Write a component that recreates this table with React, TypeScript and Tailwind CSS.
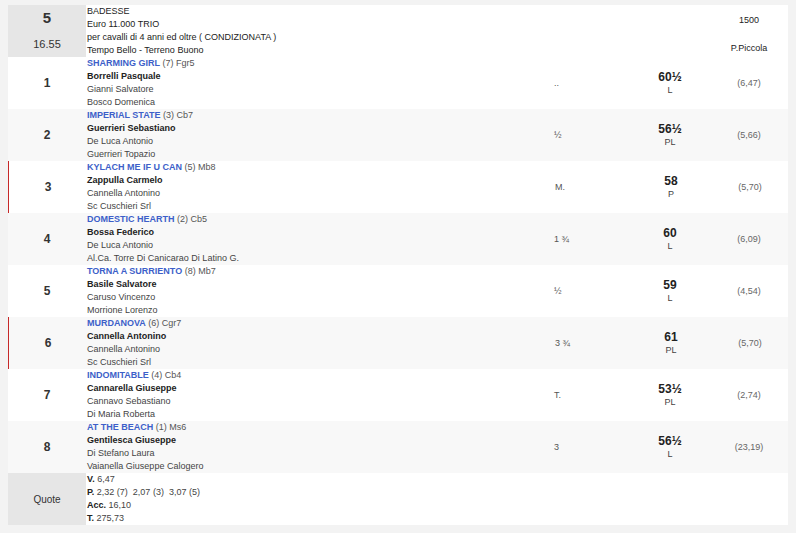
import React from 'react';

type Runner = {
  num: number;
  horse: string;
  extra: string;
  jockey: string;
  trainer: string;
  owner: string;
  dist: string;
  weight: string;
  flag: string;
  odds: string;
  mark?: boolean;
};

const RUNNERS: Runner[] = [
  { num: 1, horse: 'SHARMING GIRL', extra: '(7) Fgr5', jockey: 'Borrelli Pasquale', trainer: 'Gianni Salvatore', owner: 'Bosco Domenica', dist: '..', weight: '60½', flag: 'L', odds: '(6,47)' },
  { num: 2, horse: 'IMPERIAL STATE', extra: '(3) Cb7', jockey: 'Guerrieri Sebastiano', trainer: 'De Luca Antonio', owner: 'Guerrieri Topazio', dist: '½', weight: '56½', flag: 'PL', odds: '(5,66)' },
  { num: 3, horse: 'KYLACH ME IF U CAN', extra: '(5) Mb8', jockey: 'Zappulla Carmelo', trainer: 'Cannella Antonino', owner: 'Sc Cuschieri Srl', dist: 'M.', weight: '58', flag: 'P', odds: '(5,70)', mark: true },
  { num: 4, horse: 'DOMESTIC HEARTH', extra: '(2) Cb5', jockey: 'Bossa Federico', trainer: 'De Luca Antonio', owner: 'Al.Ca. Torre Di Canicarao Di Latino G.', dist: '1 ¾', weight: '60', flag: 'L', odds: '(6,09)' },
  { num: 5, horse: 'TORNA A SURRIENTO', extra: '(8) Mb7', jockey: 'Basile Salvatore', trainer: 'Caruso Vincenzo', owner: 'Morrione Lorenzo', dist: '½', weight: '59', flag: 'L', odds: '(4,54)' },
  { num: 6, horse: 'MURDANOVA', extra: '(6) Cgr7', jockey: 'Cannella Antonino', trainer: 'Cannella Antonino', owner: 'Sc Cuschieri Srl', dist: '3 ¾', weight: '61', flag: 'PL', odds: '(5,70)', mark: true },
  { num: 7, horse: 'INDOMITABLE', extra: '(4) Cb4', jockey: 'Cannarella Giuseppe', trainer: 'Cannavo Sebastiano', owner: 'Di Maria Roberta', dist: 'T.', weight: '53½', flag: 'PL', odds: '(2,74)' },
  { num: 8, horse: 'AT THE BEACH', extra: '(1) Ms6', jockey: 'Gentilesca Giuseppe', trainer: 'Di Stefano Laura', owner: 'Vaianella Giuseppe Calogero', dist: '3', weight: '56½', flag: 'L', odds: '(23,19)' },
];

const grid = 'grid grid-cols-[78px_466px_78px_80px_78px]';

const App = () => {
  return (
    <div className="min-h-[533px] bg-[#f3f3f3] pt-[5px] px-2 font-['Liberation_Sans',Arial,sans-serif] text-[9px] leading-[13px] text-[#333]">
      <div className="w-[780px]">
        {/* race header */}
        <div className={`${grid} bg-white h-[52px]`}>
          <div className="bg-[#e6e6e6] flex flex-col items-center pt-[4px]">
            <span className="text-[15px] leading-[18px] font-bold text-[#333]">5</span>
            <span className="text-[11px] leading-[14px] mt-[10px] text-[#333]">16.55</span>
          </div>
          <div className="pl-[1px] text-[#222]">
            <div>BADESSE</div>
            <div>Euro 11.000 TRIO</div>
            <div>per cavalli di 4 anni ed oltre ( CONDIZIONATA )</div>
            <div>Tempo Bello - Terreno Buono</div>
          </div>
          <div />
          <div />
          <div className="flex flex-col items-center pt-[9px] text-[#222]">
            <span>1500</span>
            <span className="mt-[15px]">P.Piccola</span>
          </div>
        </div>

        {RUNNERS.map((r) => (
          <div
            key={r.num}
            className={`${grid} h-[52px] ${r.num % 2 === 0 ? 'bg-[#f8f8f8]' : 'bg-white'} ${r.mark ? 'border-l border-[#c62828]' : ''}`}
          >
            <div className="flex items-center justify-center text-[12px] font-bold text-[#333]">{r.num}</div>
            <div className={r.mark ? 'pl-0' : 'pl-[1px]'}>
              <div>
                <span className="font-bold text-[#3d5fc9]">{r.horse}</span>{' '}
                <span className="text-[#555]">{r.extra}</span>
              </div>
              <div className="font-bold text-[#222]">{r.jockey}</div>
              <div className="text-[#444]">{r.trainer}</div>
              <div className="text-[#444]">{r.owner}</div>
            </div>
            <div className="flex items-center pl-[2px] text-[#555]">{r.dist}</div>
            <div className="flex flex-col items-center justify-center">
              <span className="text-[12px] leading-[14px] font-bold text-[#222]">{r.weight}</span>
              <span className="text-[#444]">{r.flag}</span>
            </div>
            <div className="flex items-center justify-center text-[#666]">{r.odds}</div>
          </div>
        ))}

        {/* quote */}
        <div className={`${grid} bg-white h-[52px]`}>
          <div className="bg-[#e6e6e6] flex items-center justify-center text-[10px] text-[#333]">Quote</div>
          <div className="pl-[1px] text-[#444]">
            <div><b className="text-[#222]">V.</b> 6,47</div>
            <div><b className="text-[#222]">P.</b> 2,32 (7)&nbsp; 2,07 (3)&nbsp; 3,07 (5)</div>
            <div><b className="text-[#222]">Acc.</b> 16,10</div>
            <div><b className="text-[#222]">T.</b> 275,73</div>
          </div>
          <div />
          <div />
          <div />
        </div>
      </div>
    </div>
  );
};

export default App;
